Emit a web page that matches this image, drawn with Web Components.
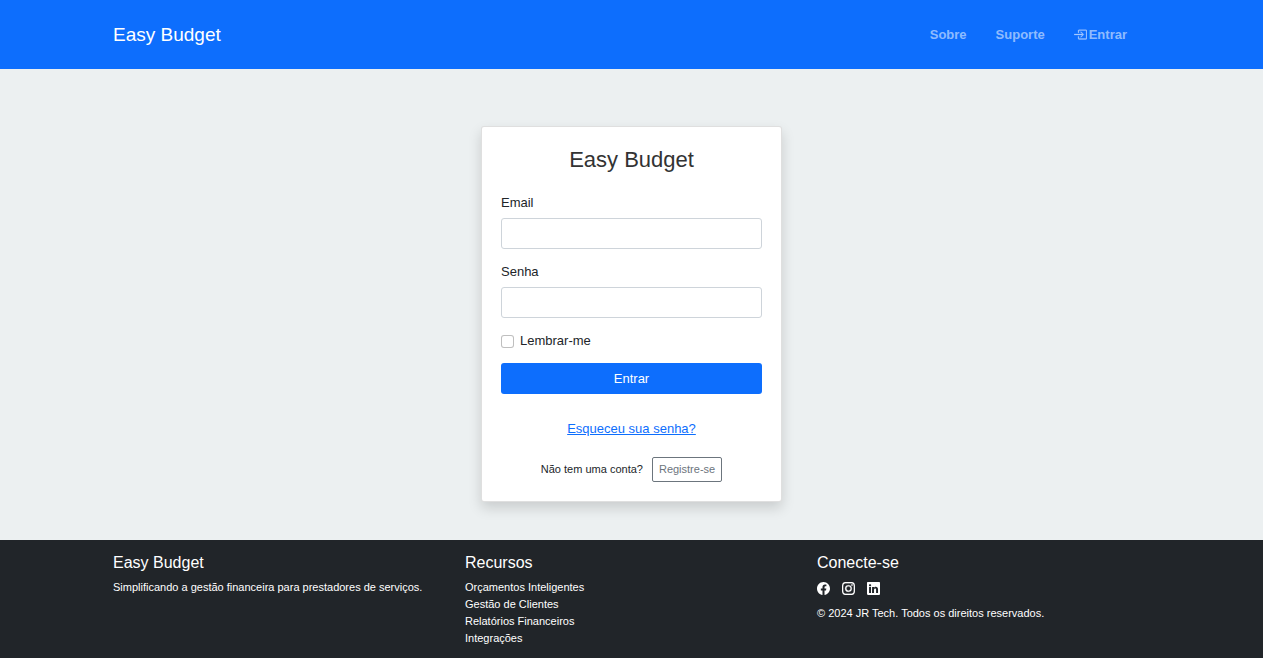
<!DOCTYPE html>
<html lang="pt-BR">
<head>
<meta charset="utf-8">
<meta name="viewport" content="width=device-width, initial-scale=1">
<title>Easy Budget</title>
<style>
  body {
    margin: 0;
    min-height: 100vh;
    display: flex;
    flex-direction: column;
    background: #ecf0f1;
    color: #212529;
    font: 13px/20px "Liberation Sans", Arial, sans-serif;
    --primary: #0d6efd;
    --content: 1037px;
    --gutter: 19px;
    --small: 11px;
  }
</style>
</head>
<body>
<eb-header brand="Easy Budget">
  <eb-nav-link href="#sobre">Sobre</eb-nav-link>
  <eb-nav-link href="#suporte">Suporte</eb-nav-link>
  <eb-nav-link href="#entrar"><eb-icon slot="icon" name="enter"></eb-icon>Entrar</eb-nav-link>
</eb-header>
<eb-main>
  <eb-login-card></eb-login-card>
</eb-main>
<eb-footer>
  <eb-footer-column heading="Easy Budget">Simplificando a gestão financeira para prestadores de serviços.</eb-footer-column>
  <eb-footer-column heading="Recursos">
    <eb-footer-link href="#orcamentos">Orçamentos Inteligentes</eb-footer-link>
    <eb-footer-link href="#clientes">Gestão de Clientes</eb-footer-link>
    <eb-footer-link href="#relatorios">Relatórios Financeiros</eb-footer-link>
    <eb-footer-link href="#integracoes">Integrações</eb-footer-link>
  </eb-footer-column>
  <eb-footer-column heading="Conecte-se">
    <eb-social></eb-social>
    © 2024 JR Tech. Todos os direitos reservados.
  </eb-footer-column>
</eb-footer>

<script>
  class Base extends HTMLElement {
    constructor() {
      super();
      this.attachShadow({ mode: "open" });
    }
    connectedCallback() {
      this.shadowRoot.innerHTML = this.render();
    }
  }

  const icons = {
    enter: `<g stroke="currentColor" stroke-width=".4"><path fill-rule="evenodd" d="M6 3.5a.5.5 0 0 1 .5-.5h8a.5.5 0 0 1 .5.5v9a.5.5 0 0 1-.5.5h-8a.5.5 0 0 1-.5-.5v-2a.5.5 0 0 0-1 0v2A1.5 1.5 0 0 0 6.5 14h8a1.5 1.5 0 0 0 1.5-1.5v-9A1.5 1.5 0 0 0 14.500 2h-8A1.500 1.500 0 0 0 5 3.500v2a.5.5 0 0 0 1 0z"/><path fill-rule="evenodd" d="M11.854 8.354a.5.5 0 0 0 0-.708l-3-3a.5.5 0 1 0-.708.708L10.293 7.500H.5a.5.5 0 0 0 0 1h9.793l-2.147 2.146a.5.5 0 0 0 .708.708z"/></g>`,
    facebook: `<path d="M16 8.049c0-4.446-3.582-8.050-8-8.050C3.580 0-.002 3.603-.002 8.050c0 4.017 2.926 7.347 6.750 7.951v-5.625h-2.030V8.050H6.750V6.275c0-2.017 1.195-3.131 3.022-3.131.876 0 1.791.157 1.791.157v1.980h-1.009c-.993 0-1.303.621-1.303 1.258v1.510h2.218l-.354 2.326H9.250V16c3.824-.604 6.750-3.934 6.750-7.951"/>`,
    instagram: `<path stroke="currentColor" stroke-width=".3" d="M8 0C5.829 0 5.556.010 4.703.048 3.850.088 3.269.222 2.760.420a3.900 3.900 0 0 0-1.417.923A3.900 3.900 0 0 0 .420 2.760C.222 3.268.087 3.850.048 4.700.010 5.555 0 5.827 0 8.001c0 2.172.010 2.444.048 3.297.040.852.174 1.433.372 1.942.205.526.478.972.923 1.417.444.445.890.719 1.416.923.510.198 1.090.333 1.942.372C5.555 15.990 5.827 16 8 16s2.444-.010 3.298-.048c.851-.040 1.434-.174 1.943-.372a3.900 3.900 0 0 0 1.416-.923c.445-.445.718-.891.923-1.417.197-.509.332-1.090.372-1.942C15.990 10.445 16 10.173 16 8s-.010-2.445-.048-3.299c-.040-.851-.175-1.433-.372-1.941a3.900 3.900 0 0 0-.923-1.417A3.900 3.900 0 0 0 13.240.420c-.510-.198-1.092-.333-1.943-.372C10.443.010 10.172 0 7.998 0zm-.717 1.442h.718c2.136 0 2.389.007 3.232.046.780.035 1.204.166 1.486.275.373.145.640.319.920.599s.453.546.598.920c.110.281.240.705.275 1.485.039.843.047 1.096.047 3.231s-.008 2.389-.047 3.232c-.035.780-.166 1.203-.275 1.485a2.500 2.500 0 0 1-.599.919c-.280.280-.546.453-.920.598-.280.110-.704.240-1.485.276-.843.038-1.096.047-3.232.047s-2.390-.009-3.233-.047c-.780-.036-1.203-.166-1.485-.276a2.500 2.500 0 0 1-.920-.598 2.500 2.500 0 0 1-.600-.920c-.109-.281-.240-.705-.275-1.485-.038-.843-.046-1.096-.046-3.233s.008-2.388.046-3.231c.036-.780.166-1.204.276-1.486.145-.373.319-.640.599-.920s.546-.453.920-.598c.282-.110.705-.240 1.485-.276.738-.034 1.024-.044 2.515-.045zm4.988 1.328a.960.960 0 1 0 0 1.920.960.960 0 0 0 0-1.920m-4.270 1.122a4.109 4.109 0 1 0 0 8.217 4.109 4.109 0 0 0 0-8.217m0 1.441a2.667 2.667 0 1 1 0 5.334 2.667 2.667 0 0 1 0-5.334"/>`,
    linkedin: `<path d="M0 1.146C0 .513.526 0 1.175 0h13.650C15.474 0 16 .513 16 1.146v13.708c0 .633-.526 1.146-1.175 1.146H1.175C.526 16 0 15.487 0 14.854zm4.943 12.248V6.169H2.542v7.225zm-1.200-8.212c.837 0 1.358-.554 1.358-1.248-.015-.709-.520-1.248-1.342-1.248S2.400 3.226 2.400 3.934c0 .694.521 1.248 1.327 1.248zm4.908 8.212V9.359c0-.216.016-.432.080-.586.173-.431.568-.878 1.232-.878.869 0 1.216.662 1.216 1.634v3.865h2.401V9.250c0-2.220-1.184-3.252-2.764-3.252-1.274 0-1.845.700-2.165 1.193v.025h-.016l.016-.025V6.169h-2.400c.030.678 0 7.225 0 7.225z"/>`
  };

  customElements.define("eb-icon", class extends Base {
    render() {
      return `<style>
        :host { display: inline-block; width: 13px; height: 13px; }
        svg { display: block; width: 100%; height: 100%; fill: currentColor; }
      </style>
      <svg viewBox="0 0 16 16" aria-hidden="true">${icons[this.getAttribute("name")]}</svg>`;
    }
  });

  customElements.define("eb-header", class extends Base {
    render() {
      return `<style>
        :host { display: block; background: var(--primary); padding: 0 var(--gutter); }
        header { max-width: var(--content); margin: 0 auto; padding: 20px 0; display: flex; flex-wrap: wrap; align-items: center; justify-content: space-between; }
        .brand { color: #fff; font-size: 19px; line-height: 29px; text-decoration: none; }
        nav { display: flex; gap: 29px; padding-right: 23px; }
      </style>
      <header>
        <a class="brand" href="#">${this.getAttribute("brand")}</a>
        <nav><slot></slot></nav>
      </header>`;
    }
  });

  customElements.define("eb-nav-link", class extends Base {
    render() {
      return `<style>
        :host { display: block; }
        a { display: flex; align-items: center; gap: 2px; color: rgba(255,255,255,.55); font-weight: 700; text-decoration: none; }
        a:hover { color: rgba(255,255,255,.75); }
      </style>
      <a href="${this.getAttribute("href")}"><slot name="icon"></slot><span><slot></slot></span></a>`;
    }
  });

  customElements.define("eb-main", class extends Base {
    render() {
      return `<style>
        :host { display: block; flex: 1 0 auto; }
        main { display: flex; justify-content: center; padding: 57px var(--gutter) 38px; }
      </style>
      <main><slot></slot></main>`;
    }
  });

  customElements.define("eb-field", class extends Base {
    render() {
      return `<style>
        :host { display: block; margin-bottom: 13px; }
        label { display: block; margin-bottom: 5px; }
        input { display: block; box-sizing: border-box; width: 100%; height: 31px; padding: 5px 10px; border: 1px solid #ced4da; border-radius: 3px; background: #fff; color: inherit; font: inherit; }
        input:focus { outline: 3px solid rgba(13,110,253,.25); border-color: #86b7fe; }
      </style>
      <label for="input">${this.getAttribute("label")}</label>
      <input id="input" type="${this.getAttribute("type")}">`;
    }
  });

  customElements.define("eb-login-card", class extends Base {
    render() {
      return `<style>
        :host { display: block; box-sizing: border-box; width: 100%; max-width: 301px; padding: 19px; background: #fff; border: 1px solid rgba(0,0,0,.125); border-radius: 3px; box-shadow: 0 6px 13px rgba(0,0,0,.15); }
        h1 { margin: 0 0 19px; color: #333; font-size: 22px; line-height: 28px; font-weight: 400; text-align: center; }
        .check { display: flex; align-items: center; gap: 6px; margin-bottom: 12px; }
        .check input { appearance: none; box-sizing: border-box; width: 13px; height: 13px; margin: 0; border: 1px solid rgba(0,0,0,.25); border-radius: 3px; background: #fff; }
        .check input:checked { background: var(--primary); border-color: var(--primary); }
        button { display: block; width: 100%; height: 31px; padding: 0; border: 0; border-radius: 3px; background: var(--primary); color: #fff; font: inherit; cursor: pointer; }
        .forgot { margin: 25px 0 18px; text-align: center; }
        .forgot a { color: var(--primary); }
        .register { display: flex; align-items: center; justify-content: center; gap: 9px; font-size: var(--small); line-height: 17px; }
        .register a { padding: 3px 6px; border: 1px solid #6c757d; border-radius: 2px; color: #6c757d; text-decoration: none; }
      </style>
      <h1>Easy Budget</h1>
      <form>
        <eb-field label="Email" type="email"></eb-field>
        <eb-field label="Senha" type="password"></eb-field>
        <div class="check"><input type="checkbox" id="remember"><label for="remember">Lembrar-me</label></div>
        <button type="submit">Entrar</button>
      </form>
      <div class="forgot"><a href="#senha">Esqueceu sua senha?</a></div>
      <div class="register"><span>Não tem uma conta?</span><a href="#registro">Registre-se</a></div>`;
    }
  });

  customElements.define("eb-footer", class extends Base {
    render() {
      return `<style>
        :host { display: block; background: #212529; color: #fff; padding: 13px var(--gutter) 11px; }
        footer { max-width: var(--content); margin: 0 auto; display: grid; grid-template-columns: repeat(auto-fit, minmax(240px, 1fr)); gap: var(--gutter); }
      </style>
      <footer><slot></slot></footer>`;
    }
  });

  customElements.define("eb-footer-column", class extends Base {
    render() {
      return `<style>
        :host { display: block; font-size: var(--small); line-height: 17px; }
        h2 { margin: 0 0 7px; font-size: 16px; line-height: 19px; font-weight: 400; }
      </style>
      <h2>${this.getAttribute("heading")}</h2>
      <slot></slot>`;
    }
  });

  customElements.define("eb-footer-link", class extends Base {
    render() {
      return `<style>
        :host { display: block; }
        a { color: inherit; text-decoration: none; }
      </style>
      <a href="${this.getAttribute("href")}"><slot></slot></a>`;
    }
  });

  customElements.define("eb-social", class extends Base {
    render() {
      return `<style>
        :host { display: flex; gap: 12px; padding: 3px 0 10px; }
        a { display: flex; color: inherit; }
      </style>
      <a href="#facebook" aria-label="Facebook"><eb-icon name="facebook"></eb-icon></a>
      <a href="#instagram" aria-label="Instagram"><eb-icon name="instagram"></eb-icon></a>
      <a href="#linkedin" aria-label="LinkedIn"><eb-icon name="linkedin"></eb-icon></a>`;
    }
  });
</script>
</body>
</html>
